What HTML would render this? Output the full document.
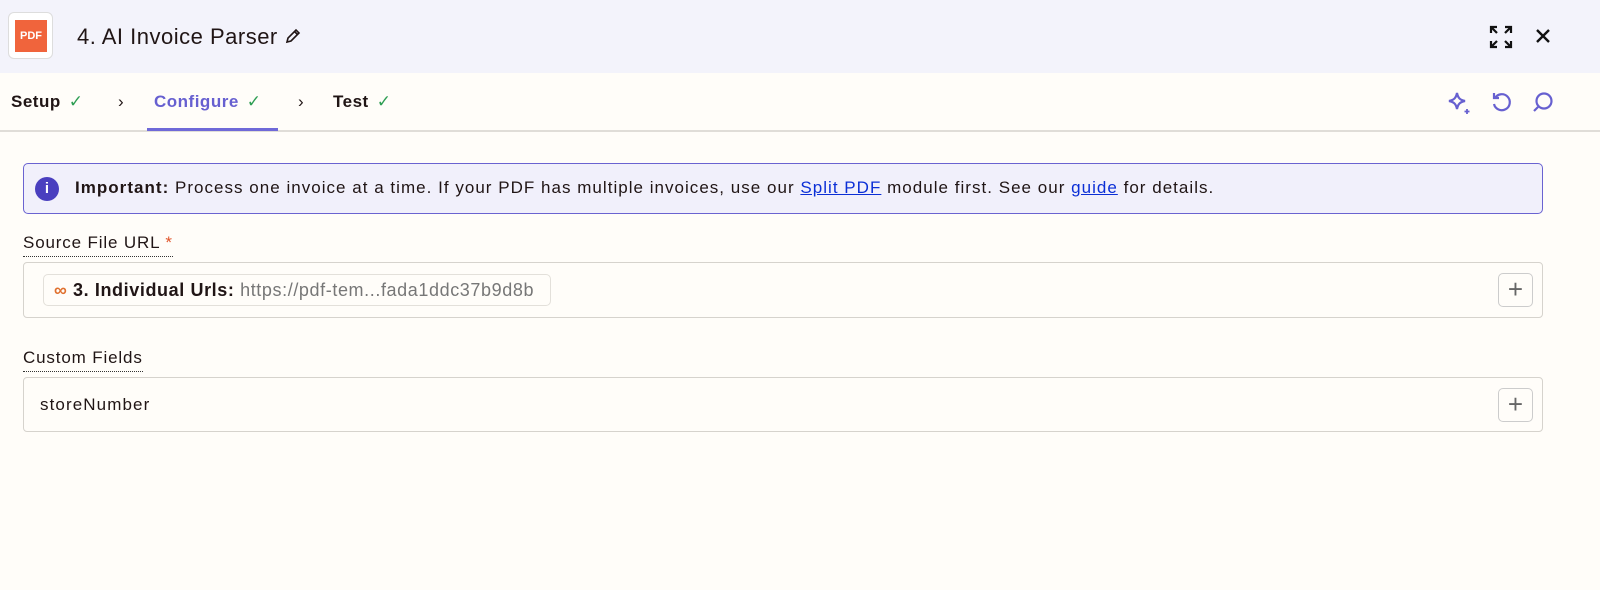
<!DOCTYPE html>
<html><head><meta charset="utf-8"><style>
*{box-sizing:border-box;margin:0;padding:0}
body{width:1600px;height:590px;background:#fffdf9;font-family:"Liberation Sans",sans-serif;color:#201515;position:relative;overflow:hidden}
.hdr{position:absolute;left:0;top:0;width:1600px;height:73px;background:#f3f3fb}
.logo{position:absolute;left:8px;top:12px;width:45px;height:47px;border:1px solid #ddd;border-radius:6px;background:#fff}
.logo div{position:absolute;left:6px;top:7px;width:32px;height:32px;background:#f0643c;color:#fff;font-size:11px;font-weight:bold;line-height:32px;text-align:center}
.title{position:absolute;left:77px;top:24px;font-size:22px;letter-spacing:0.5px;color:#201515}
.tabs{position:absolute;left:0;top:73px;width:1600px;height:59px;border-bottom:2px solid #e0ddd8}
.tab{position:absolute;top:19px;font-size:17px;letter-spacing:0.5px;font-weight:bold}
.chk{color:#2e9e54;font-weight:normal;margin-left:8px}
.info{position:absolute;left:23px;top:163px;width:1520px;height:51px;border:1px solid #6a63d1;border-radius:5px;background:#f1f0fb;font-size:17px;letter-spacing:1.02px;padding:14px 0 0 51px;white-space:nowrap}
.info a{color:#0b2fd6;text-decoration:underline}
.ii{position:absolute;left:11px;top:13px;width:24px;height:24px;border-radius:50%;background:#4a3fbf;color:#fff;font-weight:bold;font-size:15px;text-align:center;line-height:24px;letter-spacing:0}
.lbl{position:absolute;left:23px;font-size:17px;letter-spacing:0.85px;border-bottom:1px dotted #333;padding-bottom:3px}
.fld{position:absolute;left:23px;width:1520px;border:1px solid #d6d3cd;border-radius:4px;background:#fffdf9}
.plus{position:absolute;right:9px;width:35px;height:34px;border:1px solid #ccc;border-radius:5px;color:#666;font-size:26px;text-align:center;line-height:31px;font-weight:300}
.pill{position:absolute;left:19px;top:11px;height:32px;border:1px solid #e3e0da;border-radius:5px;padding:5px 0 0 10px;width:508px;font-size:18px;letter-spacing:0.6px;background:#fffdf9;white-space:nowrap;overflow:hidden}
</style></head><body>
<div class="hdr">
 <div class="logo"><div>PDF</div></div>
 <div class="title">4. AI Invoice Parser <svg width="18" height="18" viewBox="0 0 18 18" style="vertical-align:-1px"><path d="M3 15l1-4 8-8 3 3-8 8z M10.5 4.5l3 3" fill="none" stroke="#201515" stroke-width="1.6"/></svg></div>
 <svg style="position:absolute;left:1489px;top:25px" width="24" height="24" viewBox="0 0 24 24" fill="none" stroke="#111" stroke-width="2.2"><path d="M2 8V2h6M2 2l6 6M22 8V2h-6M22 2l-6 6M2 16v6h6M2 22l6-6M22 16v6h-6M22 22l-6-6"/></svg>
 <svg style="position:absolute;left:1535px;top:28px" width="16" height="16" viewBox="0 0 16 16" stroke="#111" stroke-width="2.4"><path d="M2 2l12 12M14 2L2 14"/></svg>
</div>
<div class="tabs">
 <div class="tab" style="left:11px">Setup<span class="chk">✓</span></div>
 <div class="tab" style="left:118px;font-weight:normal">›</div>
 <div class="tab" style="left:154px;color:#6760d0">Configure<span class="chk">✓</span></div>
 <div style="position:absolute;left:147px;top:55px;width:131px;height:3px;background:#6f69d8"></div>
 <div class="tab" style="left:298px;font-weight:normal">›</div>
 <div class="tab" style="left:333px">Test<span class="chk">✓</span></div>
 <svg style="position:absolute;left:1446px;top:17px" width="26" height="26" viewBox="0 0 26 26" fill="none" stroke="#6760d0" stroke-width="2.2"><path d="M11 3c1 5 3 7 8 8c-5 1-7 3-8 8c-1-5-3-7-8-8c5-1 7-3 8-8z"/><path d="M21 19v5M18.5 21.5h5" stroke-width="1.8"/></svg>
 <svg style="position:absolute;left:1489px;top:17px" width="24" height="24" viewBox="0 0 24 24" fill="none" stroke="#6760d0" stroke-width="2.2"><path d="M6 8a8 8 0 1 1-1 6"/><path d="M5 3v5h5"/></svg>
 <svg style="position:absolute;left:1530px;top:18px" width="24" height="24" viewBox="0 0 24 24" fill="none" stroke="#6760d0" stroke-width="2.2"><circle cx="14" cy="10" r="7.5"/><path d="M8 16l-4 4"/></svg>
</div>
<div class="info"><div class="ii">i</div><b>Important:</b> Process one invoice at a time. If your PDF has multiple invoices, use our <a>Split PDF</a> module first. See our <a>guide</a> for details.</div>
<div class="lbl" style="top:233px">Source File URL <span style="color:#e0542a">*</span></div>
<div class="fld" style="top:262px;height:56px">
 <div class="pill"><span style="color:#e0702e;font-weight:bold">∞</span> <b>3. Individual Urls:</b> <span style="color:#777">https://pdf-tem...fada1ddc37b9d8b</span></div>
 <div class="plus" style="top:10px">+</div>
</div>
<div class="lbl" style="top:348px">Custom Fields</div>
<div class="fld" style="top:377px;height:55px">
 <div style="position:absolute;left:16px;top:17px;font-size:17px;letter-spacing:1.1px">storeNumber</div>
 <div class="plus" style="top:10px">+</div>
</div>
</body></html>
